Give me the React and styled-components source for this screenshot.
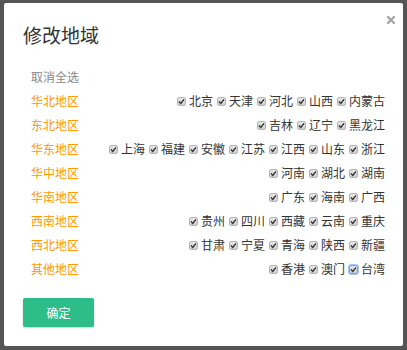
import React from "react";
import styled, { createGlobalStyle } from "styled-components";

const Global = createGlobalStyle`
  html, body { margin: 0; padding: 0; background: #555; }
  body { font-family: "Noto Sans CJK SC", "Noto Sans", sans-serif; }
  * { box-sizing: border-box; }
`;

const Backdrop = styled.div`
  width: 407px;
  height: 350px;
  background: #555;
  padding: 3px 4px;
`;

const Modal = styled.div`
  position: relative;
  width: 399px;
  height: 343px;
  background: #fff;
  border-radius: 2px;
  padding: 17px 18px 0 19px;
  display: flex;
  flex-direction: column;
`;

const Close = styled.span`
  position: absolute;
  top: 13px;
  right: 8px;
  width: 8px;
  height: 8px;
  display: flex;
`;

const Title = styled.h3`
  margin: 0;
  font-size: 19px;
  line-height: 30px;
  font-weight: normal;
  color: #333;
`;

const List = styled.div`
  margin-top: 15px;
  padding-left: 8px;
  display: flex;
  flex-direction: column;
`;

const Line = styled.div`
  height: 24px;
  display: flex;
  align-items: center;
  justify-content: space-between;
  font-size: 12px;
  line-height: 24px;
`;

const Toggle = styled.span`
  color: #888;
`;

const RegionName = styled.span`
  color: #f90;
`;

const Provinces = styled.div`
  display: flex;
  align-items: center;
`;

const Item = styled.label`
  display: flex;
  align-items: center;
  margin-left: 4px;
  color: #333;
`;

const Box = styled.span`
  width: 9px;
  height: 9px;
  margin-right: 3px;
  border: 1px solid ${(p) => (p.$focus ? "#6f9de6" : "#b5b5b5")};
  box-shadow: ${(p) => (p.$focus ? "0 0 0 1px #a9c6f2" : "none")};
  border-radius: 2px;
  background: linear-gradient(#e6e6e6, #cfcfcf);
  display: flex;
  align-items: center;
  justify-content: center;
`;

const Footer = styled.div`
  margin-top: 17px;
`;

const Button = styled.button`
  width: 71px;
  height: 29px;
  border: none;
  border-radius: 2px;
  background: #2dbd89;
  color: #fff;
  font-family: inherit;
  font-size: 12px;
  box-shadow: 0 1px 2px rgba(0, 0, 0, 0.18);
  padding: 0;
`;

const regions = [
  ["华北地区", ["北京", "天津", "河北", "山西", "内蒙古"]],
  ["东北地区", ["吉林", "辽宁", "黑龙江"]],
  ["华东地区", ["上海", "福建", "安徽", "江苏", "江西", "山东", "浙江"]],
  ["华中地区", ["河南", "湖北", "湖南"]],
  ["华南地区", ["广东", "海南", "广西"]],
  ["西南地区", ["贵州", "四川", "西藏", "云南", "重庆"]],
  ["西北地区", ["甘肃", "宁夏", "青海", "陕西", "新疆"]],
  ["其他地区", ["香港", "澳门", "台湾"]],
];

const Check = () => (
  <svg width="7" height="7" viewBox="0 0 7 7">
    <path d="M1 3.6 L2.8 5.4 L6 1.4" fill="none" stroke="#333" strokeWidth="1.4" />
  </svg>
);

export default function App() {
  return (
    <>
      <Global />
      <Backdrop>
        <Modal>
          <Close aria-label="close">
            <svg width="8" height="8" viewBox="0 0 8 8">
              <path d="M1 1 L7 7 M7 1 L1 7" stroke="#a8a8a8" strokeWidth="2.4" strokeLinecap="square" />
            </svg>
          </Close>
          <Title>修改地域</Title>
          <List>
            <Line>
              <Toggle>取消全选</Toggle>
            </Line>
            {regions.map(([name, provs]) => (
              <Line key={name}>
                <RegionName>{name}</RegionName>
                <Provinces>
                  {provs.map((p) => (
                    <Item key={p}>
                      <Box $focus={p === "台湾"}>
                        <Check />
                      </Box>
                      {p}
                    </Item>
                  ))}
                </Provinces>
              </Line>
            ))}
          </List>
          <Footer>
            <Button>确定</Button>
          </Footer>
        </Modal>
      </Backdrop>
    </>
  );
}
